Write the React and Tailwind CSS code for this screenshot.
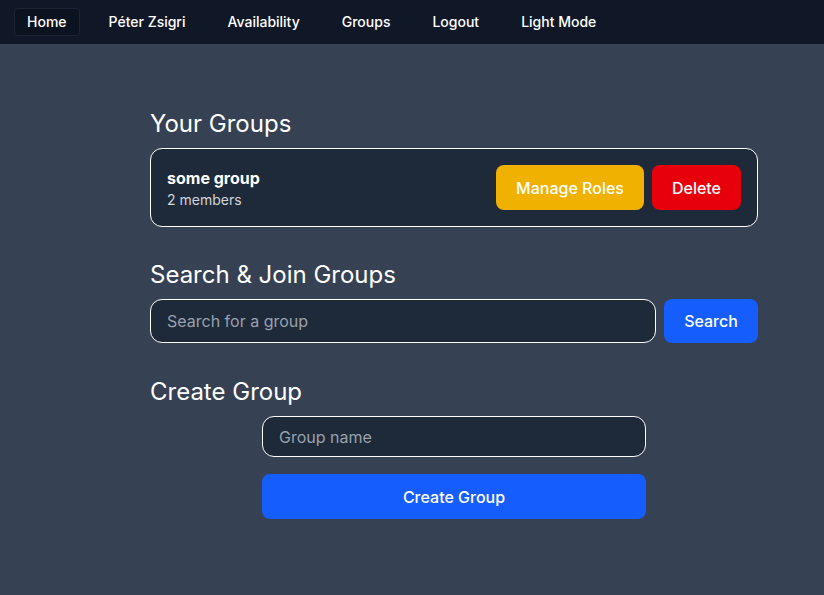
const navItems = ["Home", "Péter Zsigri", "Availability", "Groups", "Logout", "Light Mode"]

const App = () => {
  return (
    <div className="min-h-[595px] bg-[#364153] text-white font-['Inter',sans-serif]">
      <nav className="h-11 bg-[#101828] flex items-center px-3.5 gap-4">
        {navItems.map((item, i) => (
          <a
            key={item}
            href="#"
            className={
              "h-7 flex items-center px-3 text-sm font-medium rounded " +
              (i === 0 ? "bg-[#0b1220] border border-[#1c2536]" : "border border-transparent")
            }
          >
            {item}
          </a>
        ))}
      </nav>

      <div className="ml-[150px] w-[608px] pt-16">
        <h2 className="text-2xl leading-8 mb-2">Your Groups</h2>
        <div className="bg-[#1e2939] border border-white rounded-xl p-4 flex items-center justify-between">
          <div>
            <div className="font-bold text-base leading-6">some group</div>
            <div className="text-sm text-gray-300 leading-5">2 members</div>
          </div>
          <div className="flex gap-2">
            <button className="h-[45px] px-5 bg-[#f0b100] rounded-lg font-medium text-base">Manage Roles</button>
            <button className="h-[45px] px-5 bg-[#e7000b] rounded-lg font-medium text-base">Delete</button>
          </div>
        </div>

        <h2 className="text-2xl leading-8 mt-8 mb-2">Search &amp; Join Groups</h2>
        <div className="flex gap-2">
          <input
            type="text"
            placeholder="Search for a group"
            className="flex-1 h-11 bg-[#1e2939] border border-white rounded-xl px-4 text-base placeholder:text-[#99a1af] outline-none"
          />
          <button className="w-[94px] h-11 bg-[#155dfc] rounded-lg font-medium text-base">Search</button>
        </div>

        <h2 className="text-2xl leading-8 mt-[33px] mb-2">Create Group</h2>
        <div className="w-96 mx-auto flex flex-col gap-[17px]">
          <input
            type="text"
            placeholder="Group name"
            className="h-[41px] bg-[#1e2939] border border-white rounded-xl px-4 text-base placeholder:text-[#99a1af] outline-none"
          />
          <button className="h-[45px] bg-[#155dfc] rounded-lg font-medium text-base">Create Group</button>
        </div>
      </div>
    </div>
  )
}

export default App
